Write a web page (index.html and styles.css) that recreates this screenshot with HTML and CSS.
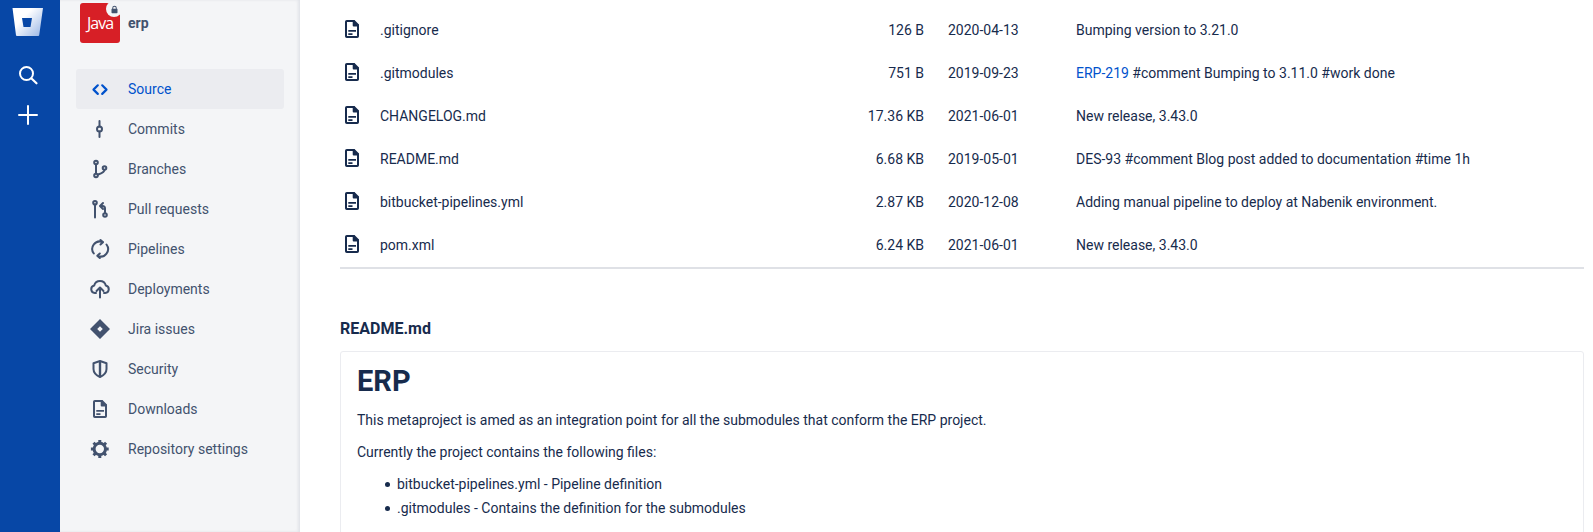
FILE: index.html
```html
<!DOCTYPE html>
<html lang="en">
<head>
    <meta charset="UTF-8">
    <meta name="viewport" content="width=device-width, initial-scale=1.0">
    <title>erp - Source</title>
    <link rel="stylesheet" href="styles.css">
</head>
<body>
    <svg class="sprites" width="0" height="0" aria-hidden="true">
        <symbol id="file" viewBox="0 0 24 24">
            <path fill="none" stroke="currentColor" stroke-width="2" stroke-linejoin="round" d="M6.800 4h6.900v4.500H18v10.700a.8.8 0 0 1-.8.8H6.800a.8.8 0 0 1-.8-.8V4.800a.8.8 0 0 1 .8-.8z"/>
            <path fill="currentColor" d="M13.500 3h1l4.500 4.500V8.500h-5.500zM8.300 13h7.700v1.800H8.300zM8.300 16.300h4.200v1.800H8.300z"/>
        </symbol>
    </svg>

    <div class="app">
        <!-- Global blue rail -->
        <nav class="rail">
            <svg class="rail-logo" viewBox="0 0 32 30">
                <defs>
                    <linearGradient id="logoGrad" x1="0.35" y1="0.35" x2="1" y2="0.9">
                        <stop offset="0" stop-color="#ffffff"/>
                        <stop offset="1" stop-color="#9db9e6"/>
                    </linearGradient>
                </defs>
                <path fill="url(#logoGrad)" fill-rule="evenodd" d="M.5 1h30.500l-3.800 27.200a1 1 0 0 1-1 .8H5a1 1 0 0 1-1-.8zM10 11l1.500 9h7l1.500-9z"/>
            </svg>
            <svg class="rail-icon" viewBox="0 0 24 24">
                <circle cx="10.500" cy="10.500" r="6.500" fill="none" stroke="#fff" stroke-width="2"/>
                <path d="M15.500 15.500l5 4.800" stroke="#fff" stroke-width="2.200" stroke-linecap="round"/>
            </svg>
            <svg class="rail-icon" viewBox="0 0 24 24">
                <path d="M12 3v18M3 12h18" stroke="#fff" stroke-width="2" stroke-linecap="round"/>
            </svg>
        </nav>

        <!-- Repository sidebar -->
        <aside class="sidebar">
            <div class="repo">
                <div class="repo-avatar">
                    Java
                    <span class="repo-lock">
                        <svg viewBox="0 0 12 12"><path fill="#42526E" d="M3 5V4a3 3 0 0 1 6 0v1h.5a.5.5 0 0 1 .5.5V10a1 1 0 0 1-1 1H3a1 1 0 0 1-1-1V5.500A.5.5 0 0 1 2.500 5zm1.300 0h3.400V4a1.700 1.700 0 0 0-3.400 0z"/></svg>
                    </span>
                </div>
                <span class="repo-name">erp</span>
            </div>

            <ul class="nav">
                <li class="nav-item active">
                    <svg viewBox="0 0 24 24"><path fill="none" stroke="currentColor" stroke-width="2.200" stroke-linecap="round" stroke-linejoin="round" d="M9.800 8.300L5.500 12.600l4.300 4.300M14.200 8.300l4.300 4.300-4.300 4.300"/></svg>
                    Source
                </li>
                <li class="nav-item">
                    <svg viewBox="0 0 24 24"><circle cx="11.500" cy="12" r="2.500" fill="none" stroke="currentColor" stroke-width="2"/><path stroke="currentColor" stroke-width="2" stroke-linecap="round" d="M11.500 4v5.500M11.500 14.500V20"/></svg>
                    Commits
                </li>
                <li class="nav-item">
                    <svg viewBox="0 0 24 24"><g fill="none" stroke="currentColor" stroke-width="2"><circle cx="8" cy="5.500" r="1.800"/><circle cx="8" cy="18.500" r="1.800"/><circle cx="16.500" cy="11" r="1.800"/><path d="M8 7.300v9.400M16.500 12.800c0 2.900-4.500 4-6.800 4.900"/></g></svg>
                    Branches
                </li>
                <li class="nav-item">
                    <svg viewBox="0 0 24 24"><g fill="none" stroke="currentColor" stroke-width="2"><circle cx="7" cy="5.700" r="1.800"/><path d="M7 7.500V20.500" stroke-linecap="round"/><circle cx="17" cy="18" r="1.800"/><path d="M17 16.200v-4.700a2.500 2.500 0 0 0-2.500-2.500H13" stroke-linecap="round"/><path d="M15 6l-3 3 3 3" stroke-linecap="round" stroke-linejoin="round"/></g></svg>
                    Pull requests
                </li>
                <li class="nav-item">
                    <svg viewBox="0 0 24 24"><g fill="none" stroke="currentColor" stroke-width="2" stroke-linecap="round" stroke-linejoin="round"><path d="M5.800 16.500A7.500 7.500 0 0 1 14.500 5M18.500 7.500A7.500 7.500 0 0 1 9.800 19"/><path d="M12.500 3l2.500 2.200-2.500 2.300M11.800 21l-2.500-2.200 2.500-2.300"/></g></svg>
                    Pipelines
                </li>
                <li class="nav-item">
                    <svg viewBox="0 0 24 24"><g fill="none" stroke="currentColor" stroke-width="2" stroke-linecap="round" stroke-linejoin="round"><path d="M8 16H6.800a3.800 3.800 0 0 1-.6-7.500A6 6 0 0 1 17.800 8.500a3.800 3.800 0 0 1-.6 7.500H16"/><path d="M12 20.500V11M8.500 14L12 10.500 15.500 14"/></g></svg>
                    Deployments
                </li>
                <li class="nav-item">
                    <svg viewBox="0 0 24 24"><path fill="currentColor" fill-rule="evenodd" d="M12 2l10 10-10 10L2 12zM12 9.200L9.200 12l2.800 2.800 2.800-2.800z"/></svg>
                    Jira issues
                </li>
                <li class="nav-item">
                    <svg viewBox="0 0 24 24"><path fill="none" stroke="currentColor" stroke-width="2" stroke-linejoin="round" d="M12 4l6.500 2.200V12c0 3.600-2.700 6.300-6.500 8-3.800-1.700-6.500-4.400-6.500-8V6.200z"/><path stroke="currentColor" stroke-width="2.400" d="M12 4v16"/></svg>
                    Security
                </li>
                <li class="nav-item">
                    <svg viewBox="0 0 24 24"><use href="#file"/></svg>
                    Downloads
                </li>
                <li class="nav-item">
                    <svg viewBox="0 0 24 24"><circle cx="11.800" cy="12" r="5.700" fill="none" stroke="currentColor" stroke-width="3"/><path stroke="currentColor" stroke-width="3" d="M11.800 3v3M11.800 18v3M2.900 12h3M17.700 12h3M5.500 5.700l2.100 2.100M16 16.200l2.100 2.100M5.500 18.300l2.100-2.100M16 7.800l2.100-2.100"/></svg>
                    Repository settings
                </li>
            </ul>
        </aside>

        <!-- Source listing and readme -->
        <main class="main">
            <div class="files">
                <div class="file-row">
                    <svg class="file-icon"><use href="#file"/></svg>
                    <span class="file-name">.gitignore</span>
                    <span class="file-size">126 B</span>
                    <span class="file-date">2020-04-13</span>
                    <span class="file-msg">Bumping version to 3.21.0</span>
                </div>
                <div class="file-row">
                    <svg class="file-icon"><use href="#file"/></svg>
                    <span class="file-name">.gitmodules</span>
                    <span class="file-size">751 B</span>
                    <span class="file-date">2019-09-23</span>
                    <span class="file-msg"><a href="#">ERP-219</a> #comment Bumping to 3.11.0 #work done</span>
                </div>
                <div class="file-row">
                    <svg class="file-icon"><use href="#file"/></svg>
                    <span class="file-name">CHANGELOG.md</span>
                    <span class="file-size">17.36 KB</span>
                    <span class="file-date">2021-06-01</span>
                    <span class="file-msg">New release, 3.43.0</span>
                </div>
                <div class="file-row">
                    <svg class="file-icon"><use href="#file"/></svg>
                    <span class="file-name">README.md</span>
                    <span class="file-size">6.68 KB</span>
                    <span class="file-date">2019-05-01</span>
                    <span class="file-msg">DES-93 #comment Blog post added to documentation #time 1h</span>
                </div>
                <div class="file-row">
                    <svg class="file-icon"><use href="#file"/></svg>
                    <span class="file-name">bitbucket-pipelines.yml</span>
                    <span class="file-size">2.87 KB</span>
                    <span class="file-date">2020-12-08</span>
                    <span class="file-msg">Adding manual pipeline to deploy at Nabenik environment.</span>
                </div>
                <div class="file-row">
                    <svg class="file-icon"><use href="#file"/></svg>
                    <span class="file-name">pom.xml</span>
                    <span class="file-size">6.24 KB</span>
                    <span class="file-date">2021-06-01</span>
                    <span class="file-msg">New release, 3.43.0</span>
                </div>
            </div>

            <h2 class="readme-title">README.md</h2>
            <section class="readme">
                <h1>ERP</h1>
                <p>This metaproject is amed as an integration point for all the submodules that conform the ERP project.</p>
                <p>Currently the project contains the following files:</p>
                <ul>
                    <li>bitbucket-pipelines.yml - Pipeline definition</li>
                    <li>.gitmodules - Contains the definition for the submodules</li>
                </ul>
            </section>
        </main>
    </div>
</body>
</html>
```

FILE: styles.css
```css
* {
    box-sizing: border-box;
}

html, body {
    height: 100%;
    margin: 0;
    overflow: hidden;
}

body {
    font-family: Roboto, "Liberation Sans", sans-serif;
    font-size: 14px;
    color: #172B4D;
    background-color: #fff;
}

.sprites {
    display: none;
}

.app {
    display: flex;
    height: 100vh;
    overflow: hidden;
}

/* Blue rail */
.rail {
    flex: 0 0 60px;
    display: flex;
    flex-direction: column;
    align-items: center;
    padding-right: 4px;
    background-color: #0747A6;
}

.rail-logo {
    width: 32px;
    height: 30px;
    margin-top: 7px;
    margin-bottom: 26px;
}

.rail-icon {
    width: 24px;
    height: 24px;
    margin-bottom: 16px;
}

/* Sidebar */
.sidebar {
    flex: 0 0 240px;
    padding: 3px 16px 0;
    background-color: #F4F5F7;
    box-shadow: inset -2px 0 3px rgba(9, 30, 66, 0.08);
}

.repo {
    display: flex;
    align-items: center;
    gap: 8px;
    padding-left: 4px;
}

.repo-avatar {
    position: relative;
    display: flex;
    align-items: center;
    justify-content: center;
    width: 40px;
    height: 40px;
    border-radius: 3px;
    background-color: #D71F26;
    color: #fff;
    font-family: "Open Sans", sans-serif;
    font-size: 16px;
    letter-spacing: -1px;
}

.repo-lock {
    position: absolute;
    top: -2px;
    right: -2px;
    display: flex;
    align-items: center;
    justify-content: center;
    width: 16px;
    height: 16px;
    border-radius: 50%;
    background-color: #F4F5F7;
}

.repo-lock svg {
    width: 9px;
    height: 9px;
}

.repo-name {
    font-weight: 700;
    color: #42526E;
}

.nav {
    list-style: none;
    margin: 26px 0 0;
    padding: 0;
}

.nav-item {
    display: flex;
    align-items: center;
    gap: 16px;
    width: 208px;
    height: 40px;
    padding-left: 12px;
    border-radius: 3px;
    color: #42526E;
}

.nav-item svg {
    flex: 0 0 24px;
    width: 24px;
    height: 24px;
}

.nav-item.active {
    background-color: #EBECF0;
    color: #0052CC;
}

/* File table */
.main {
    flex: 1;
    min-width: 0;
    padding: 8px 9px 0 40px;
}

.files {
    padding-bottom: 1px;
    border-bottom: 2px solid #DFE1E6;
}

.file-row {
    display: grid;
    grid-template-columns: 40px 464px 80px 152px 1fr;
    align-items: center;
    height: 43px;
}

.file-icon {
    width: 24px;
    height: 24px;
    margin-top: -1px;
    color: #172B4D;
}

.file-size {
    text-align: right;
}

.file-date {
    padding-left: 24px;
}

.file-msg a {
    color: #0052CC;
    text-decoration: none;
}

/* Readme */
.readme-title {
    margin: 50px 0 12px;
    font-size: 16px;
    line-height: 20px;
    font-weight: 700;
}

.readme {
    height: 300px;
    padding: 11px 16px 0;
    border: 1px solid #EBECF0;
    border-radius: 3px;
}

.readme h1 {
    margin: 0 0 11px;
    font-size: 29px;
    line-height: 36px;
    font-weight: 700;
}

.readme p {
    margin: 0 0 12px;
    line-height: 20px;
}

.readme ul {
    list-style: none;
    margin: 0;
    padding-left: 40px;
}

.readme li {
    position: relative;
    line-height: 20px;
    margin-bottom: 4px;
}

.readme li::before {
    content: "";
    position: absolute;
    left: -12px;
    top: 8px;
    width: 5px;
    height: 5px;
    border-radius: 50%;
    background-color: #172B4D;
}
```
